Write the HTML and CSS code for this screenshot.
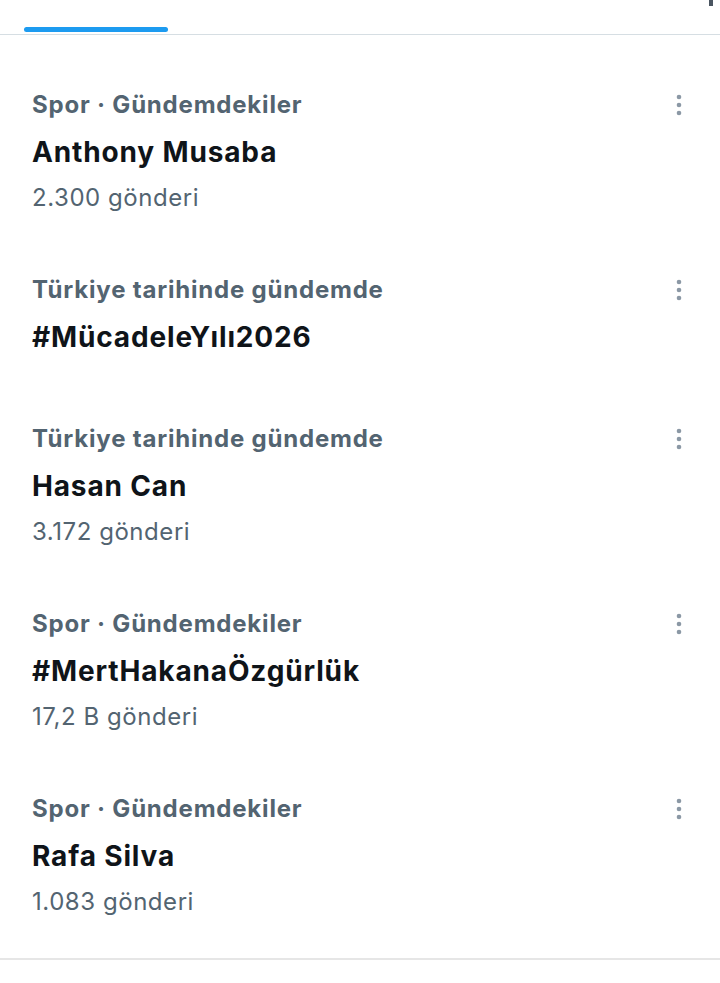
FILE: index.html
```html
<!DOCTYPE html>
<html lang="tr">
<head>
<meta charset="utf-8">
<link rel="stylesheet" href="styles.css">
</head>
<body>
<div class="page">
  <span class="corner-mark"></span>
  <div class="tabs">
    <div class="tab-indicator"></div>
  </div>
  <ul class="trends">
    <li class="trend">
      <div class="trend-body">
        <div class="trend-meta">Spor · Gündemdekiler</div>
        <div class="trend-title">Anthony Musaba</div>
        <div class="trend-count">2.300 gönderi</div>
      </div>
      <button class="more" aria-label="Diğer"><svg viewBox="0 0 6 22" width="6" height="22"><circle cx="3" cy="3" r="2.3"/><circle cx="3" cy="11" r="2.3"/><circle cx="3" cy="19" r="2.3"/></svg></button>
    </li>
    <li class="trend trend-short">
      <div class="trend-body">
        <div class="trend-meta">Türkiye tarihinde gündemde</div>
        <div class="trend-title">#MücadeleYılı2026</div>
      </div>
      <button class="more" aria-label="Diğer"><svg viewBox="0 0 6 22" width="6" height="22"><circle cx="3" cy="3" r="2.3"/><circle cx="3" cy="11" r="2.3"/><circle cx="3" cy="19" r="2.3"/></svg></button>
    </li>
    <li class="trend">
      <div class="trend-body">
        <div class="trend-meta">Türkiye tarihinde gündemde</div>
        <div class="trend-title">Hasan Can</div>
        <div class="trend-count">3.172 gönderi</div>
      </div>
      <button class="more" aria-label="Diğer"><svg viewBox="0 0 6 22" width="6" height="22"><circle cx="3" cy="3" r="2.3"/><circle cx="3" cy="11" r="2.3"/><circle cx="3" cy="19" r="2.3"/></svg></button>
    </li>
    <li class="trend">
      <div class="trend-body">
        <div class="trend-meta">Spor · Gündemdekiler</div>
        <div class="trend-title">#MertHakanaÖzgürlük</div>
        <div class="trend-count">17,2 B gönderi</div>
      </div>
      <button class="more" aria-label="Diğer"><svg viewBox="0 0 6 22" width="6" height="22"><circle cx="3" cy="3" r="2.3"/><circle cx="3" cy="11" r="2.3"/><circle cx="3" cy="19" r="2.3"/></svg></button>
    </li>
    <li class="trend">
      <div class="trend-body">
        <div class="trend-meta">Spor · Gündemdekiler</div>
        <div class="trend-title">Rafa Silva</div>
        <div class="trend-count">1.083 gönderi</div>
      </div>
      <button class="more" aria-label="Diğer"><svg viewBox="0 0 6 22" width="6" height="22"><circle cx="3" cy="3" r="2.3"/><circle cx="3" cy="11" r="2.3"/><circle cx="3" cy="19" r="2.3"/></svg></button>
    </li>
  </ul>
  <div class="bottom-rule"></div>
</div>
</body>
</html>
```
FILE: styles.css
```css
* { box-sizing: border-box; }
html, body { margin: 0; padding: 0; background: #ffffff; }
body {
  font-family: Inter, "Noto Sans", "Liberation Sans", sans-serif;
  color: #0f1419;
}
.page {
  position: relative;
  width: 720px;
  min-height: 983px;
}
.corner-mark {
  position: absolute;
  top: 0;
  left: 709px;
  width: 4px;
  height: 6px;
  background: #4a5561;
}
.tabs {
  height: 35px;
  display: flex;
  align-items: flex-end;
  padding: 0 0 2px 24px;
  border-bottom: 1px solid #d6dee3;
}
.tab-indicator {
  width: 144px;
  height: 5px;
  border-radius: 3px;
  background: #1d9bf0;
}
.trends {
  list-style: none;
  margin: 0;
  padding: 24px 0 0 0;
}
.trend {
  display: flex;
  justify-content: space-between;
  align-items: flex-start;
  padding: 28px 31px 28px 32px;
}
.trend-short { padding-bottom: 38px; }
.trend-meta {
  font-size: 24px;
  line-height: 36px;
  font-weight: 700;
  letter-spacing: 0.8px;
  color: #536471;
}
.trend-title {
  margin-top: 11px;
  font-size: 28px;
  line-height: 36px;
  font-weight: 700;
  letter-spacing: 0.85px;
  color: #0f1419;
}
.trend-count {
  margin-top: 10px;
  font-size: 24px;
  line-height: 36px;
  letter-spacing: 0.55px;
  color: #536471;
}
.more {
  width: 20px;
  height: 36px;
  padding: 0;
  border: 0;
  background: transparent;
  display: flex;
  align-items: center;
  justify-content: center;
  fill: #8b98a5;
}
.bottom-rule {
  margin-top: 10px;
  height: 2px;
  background: #e6e6e6;
}
```
